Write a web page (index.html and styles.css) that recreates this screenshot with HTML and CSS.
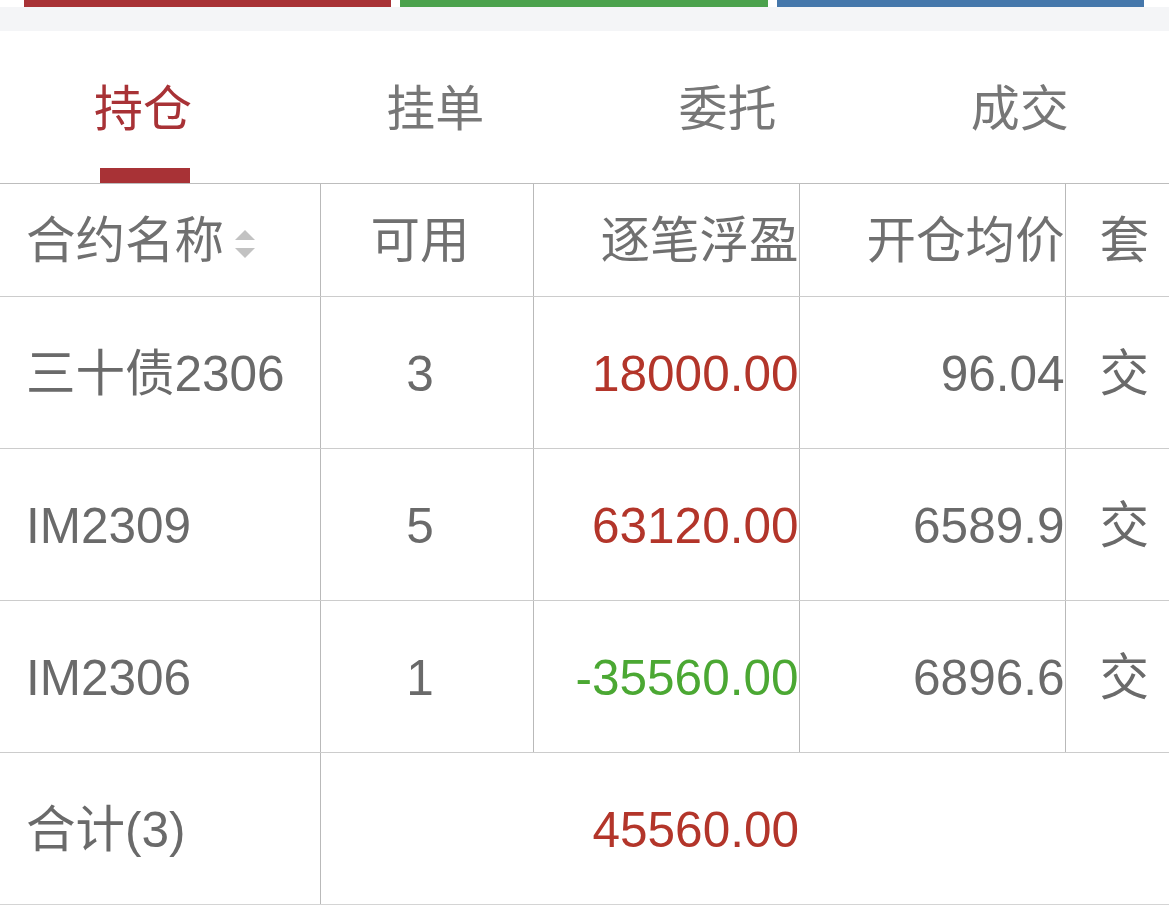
FILE: index.html
```html
<!DOCTYPE html>
<html lang="zh-CN">
<head>
<meta charset="utf-8">
<title>持仓</title>
<link rel="stylesheet" href="styles.css">
</head>
<body>
<div class="page">
  <div class="color-bars">
    <span class="bar bar-red"></span>
    <span class="bar bar-green"></span>
    <span class="bar bar-blue"></span>
  </div>
  <div class="gap-band"></div>
  <nav class="tabs">
    <div class="tab active"><span class="tab-label">持仓</span><span class="tab-indicator"></span></div>
    <div class="tab"><span class="tab-label">挂单</span><span class="tab-indicator"></span></div>
    <div class="tab"><span class="tab-label">委托</span><span class="tab-indicator"></span></div>
    <div class="tab"><span class="tab-label">成交</span><span class="tab-indicator"></span></div>
  </nav>
  <div class="table-wrap">
    <table class="positions">
      <colgroup>
        <col class="c-name"><col class="c-avail"><col class="c-pnl"><col class="c-price"><col class="c-hedge">
      </colgroup>
      <thead>
        <tr>
          <th class="col-name">合约名称<svg class="sort-icon" viewBox="0 0 20 30" width="20" height="30"><polygon points="10,0 20,10 0,10" fill="#c2c2c2"/><polygon points="0,18 20,18 10,28" fill="#c2c2c2"/></svg></th>
          <th class="col-avail">可用</th>
          <th class="col-num">逐笔浮盈</th>
          <th class="col-num">开仓均价</th>
          <th class="col-hedge">套</th>
        </tr>
      </thead>
      <tbody>
        <tr>
          <td class="col-name">三十债2306</td>
          <td class="col-avail">3</td>
          <td class="col-num up">18000.00</td>
          <td class="col-num">96.04</td>
          <td class="col-hedge">交</td>
        </tr>
        <tr>
          <td class="col-name">IM2309</td>
          <td class="col-avail">5</td>
          <td class="col-num up">63120.00</td>
          <td class="col-num">6589.9</td>
          <td class="col-hedge">交</td>
        </tr>
        <tr>
          <td class="col-name">IM2306</td>
          <td class="col-avail">1</td>
          <td class="col-num down">-35560.00</td>
          <td class="col-num">6896.6</td>
          <td class="col-hedge">交</td>
        </tr>
        <tr class="total-row">
          <td class="col-name">合计(3)</td>
          <td class="col-num up total-value" colspan="2">45560.00</td>
          <td class="total-rest" colspan="2"></td>
        </tr>
      </tbody>
    </table>
  </div>
</div>
</body>
</html>
```

FILE: styles.css
```css
* { box-sizing: border-box; }

html, body {
  margin: 0;
  padding: 0;
  background: #ffffff;
}

body {
  font-family: "Liberation Sans", "Noto Sans CJK SC", sans-serif;
  color: #6a6a6a;
  overflow: hidden;
  width: 1169px;
}

.page {
  width: 1169px;
}

.color-bars {
  display: flex;
  gap: 9px;
  padding: 0 25px 0 24px;
  height: 7px;
  background: #ffffff;
}

.bar {
  flex: 1;
  height: 7px;
}

.bar-red { background: #a83236; }
.bar-green { background: #4ba24d; }
.bar-blue { background: #4577ab; }

.gap-band {
  height: 24px;
  background: #f4f5f7;
}

.tabs {
  display: flex;
  height: 153px;
  border-bottom: 1px solid #bdbdbd;
}

.tab {
  flex: 1;
  display: flex;
  flex-direction: column;
  align-items: center;
  padding-right: 2px;
}

.tab-label {
  margin-top: 54px;
  margin-right: 4px;
  font-size: 49px;
  line-height: 49px;
  color: #777777;
}

.tab-indicator {
  margin-top: auto;
  width: 90px;
  height: 15px;
  background: transparent;
}

.tab.active .tab-label { color: #a83236; }
.tab.active .tab-indicator { background: #a83236; }

.table-wrap {
  width: 1169px;
  overflow: hidden;
}

.positions {
  width: 1180px;
  table-layout: fixed;
  border-collapse: collapse;
  font-size: 49.5px;
  line-height: 56px;
}

.c-name { width: 320px; }
.c-avail { width: 213px; }
.c-pnl { width: 266px; }
.c-price { width: 266px; }
.c-hedge { width: 115px; }

.positions th,
.positions td {
  font-weight: 400;
  padding: 0;
  vertical-align: middle;
  white-space: nowrap;
  border-bottom: 1px solid #cccccc;
  border-left: 1px solid #b9b9b9;
  color: #6a6a6a;
}

.positions thead th {
  height: 112px;
  color: #707070;
  padding-top: 3px;
}

.positions tbody td {
  height: 152px;
  padding-top: 4px;
}

.positions .col-name {
  border-left: none;
  text-align: left;
  padding-left: 26px;
}

.col-avail {
  text-align: center;
  padding-right: 13px !important;
}

.col-num {
  text-align: right;
}

.col-hedge {
  text-align: left;
  padding-left: 34px !important;
}

.sort-icon {
  display: inline-block;
  width: 20px;
  height: 30px;
  margin-left: 11px;
  vertical-align: -2px;
}

.positions td.up { color: #b3352a; }
.positions td.down { color: #4ba833; }

.total-row td {
  border-bottom: 1px solid #d4d4d4;
}

.positions .total-rest {
  border-left: none;
}
```
